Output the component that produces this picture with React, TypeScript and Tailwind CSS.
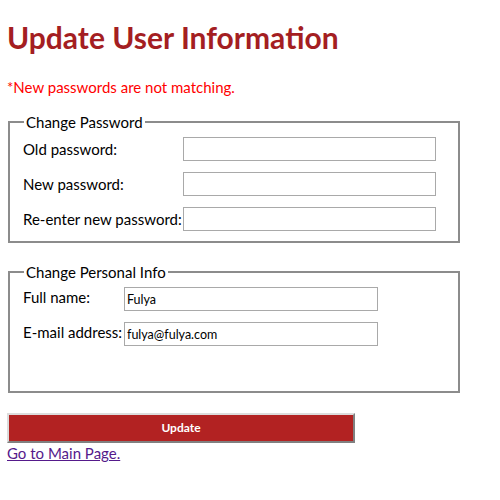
export default function App() {
  return (
    <div className="min-h-[500px] bg-white px-[7px] pt-[18px] font-['Lato','Open_Sans',sans-serif] text-[15px] text-black">
      <h1 className="text-[30px] font-bold leading-[38px] text-[#a41e22]">Update User Information</h1>

      <p className="mt-[22px] text-[15px] leading-[18px] text-[#ff0000]">*New passwords are not matching.</p>

      {/* Change Password */}
      <fieldset className="mt-[18px] ml-[1px] w-[452px] h-[129px] border-2 border-[#8c8c8c] px-[13px] pb-[8px]">
        <legend className="ml-[1px] px-[2px] leading-[16px]">Change Password</legend>
        <div className="flex flex-col gap-[11px] pt-[7px]">
          {["Old password:", "New password:", "Re-enter new password:"].map((label) => (
            <div key={label} className="flex items-center">
              <label className="w-[160px] leading-[20px]">{label}</label>
              <input
                type="password"
                className="w-[253px] h-[24px] border border-[#a9a9a9] bg-white"
              />
            </div>
          ))}
        </div>
      </fieldset>

      {/* Change Personal Info */}
      <fieldset className="mt-[21px] ml-[1px] w-[452px] h-[129px] border-2 border-[#8c8c8c] px-[13px]">
        <legend className="ml-[1px] px-[2px] leading-[16px]">Change Personal Info</legend>
        <div className="flex flex-col gap-[11px] pt-[7px]">
          <div className="flex items-start">
            <label className="w-[101px] leading-[20px]">Full name:</label>
            <input
              defaultValue="Fulya"
              className="w-[254px] h-[24px] border border-[#a9a9a9] px-[2px] text-[12.5px]"
            />
          </div>
          <div className="flex items-start">
            <label className="w-[101px] leading-[20px]">E-mail address:</label>
            <input
              defaultValue="fulya@fulya.com"
              className="w-[254px] h-[24px] border border-[#a9a9a9] px-[2px] text-[12.5px]"
            />
          </div>
        </div>
      </fieldset>

      <button className="mt-[20px] block w-[348px] h-[30px] border-2 border-t-[#dcdcdc] border-l-[#dcdcdc] border-b-[#808080] border-r-[#808080] bg-[#b22222] text-[12px] font-bold text-white">
        Update
      </button>
      <a href="#" className="block text-[15px] leading-[20px] text-[#551a8b] underline">
        Go to Main Page.
      </a>
    </div>
  );
}
